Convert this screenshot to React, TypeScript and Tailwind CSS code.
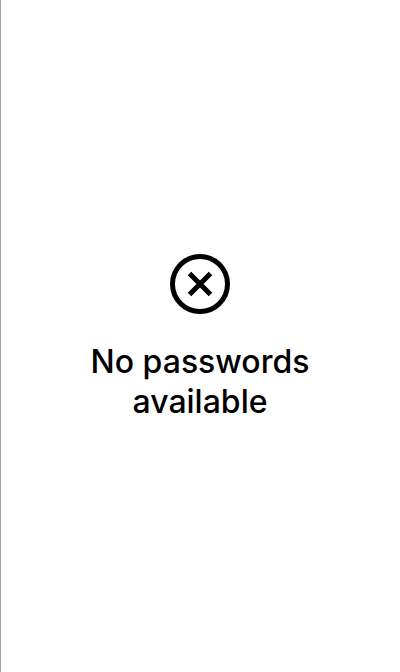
export default function App() {
  return (
    <main className="flex min-h-screen flex-col items-center justify-center gap-7 border-x border-r-white border-l-[#a3a3a3] bg-white px-16 pt-1 font-['Inter',sans-serif] text-black">
      <svg className="size-[60px]" viewBox="0 0 60 60" fill="none" stroke="currentColor" strokeWidth="5" aria-hidden="true">
        <circle cx="30" cy="30" r="27.5" />
        <path d="M19.5 19.5 40.5 40.5M40.5 19.5 19.5 40.5" />
      </svg>
      <p className="text-center text-[32px] leading-10 font-medium">No passwords available</p>
    </main>
  );
}
